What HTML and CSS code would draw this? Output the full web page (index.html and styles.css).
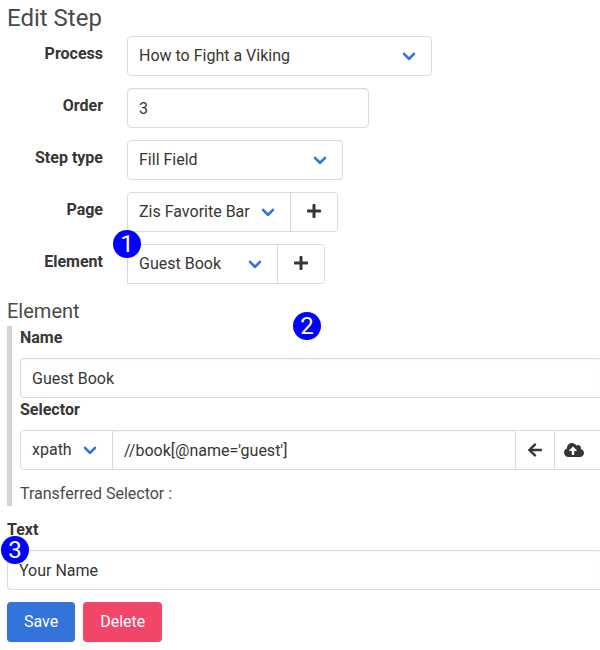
FILE: index.html
```html
<!DOCTYPE html>
<html lang="en">
<head>
<meta charset="utf-8">
<title>Edit Step</title>
<link rel="stylesheet" href="styles.css">
</head>
<body>
<main class="page">
  <h1 class="title">Edit Step</h1>
  <div class="rows">
    <div class="row"><div class="row-label">Process</div><div class="select w-process">How to Fight a Viking</div></div>
    <div class="row"><div class="row-label">Order</div><div class="input w-order">3</div></div>
    <div class="row"><div class="row-label">Step type</div><div class="select w-type">Fill Field</div></div>
    <div class="row"><div class="row-label">Page</div>
      <div class="addons">
        <div class="select w-page">Zis Favorite Bar</div>
        <div class="icon-button add"><svg width="14" height="16" viewBox="0 0 448 512"><path d="M416 208H272V64c0-17.67-14.33-32-32-32h-32c-17.67 0-32 14.33-32 32v144H32c-17.67 0-32 14.33-32 32v32c0 17.67 14.33 32 32 32h144v144c0 17.67 14.33 32 32 32h32c17.67 0 32-14.33 32-32V304h144c17.67 0 32-14.33 32-32v-32c0-17.67-14.33-32-32-32z"/></svg></div>
      </div>
    </div>
    <div class="row"><div class="row-label">Element</div>
      <div class="addons">
        <div class="select w-element">Guest Book</div>
        <div class="icon-button add"><svg width="14" height="16" viewBox="0 0 448 512"><path d="M416 208H272V64c0-17.67-14.33-32-32-32h-32c-17.67 0-32 14.33-32 32v144H32c-17.67 0-32 14.33-32 32v32c0 17.67 14.33 32 32 32h144v144c0 17.67 14.33 32 32 32h32c17.67 0 32-14.33 32-32V304h144c17.67 0 32-14.33 32-32v-32c0-17.67-14.33-32-32-32z"/></svg></div>
        <span class="marker marker-one">1</span>
      </div>
    </div>
  </div>
  <h2 class="subtitle">Element</h2>
  <section class="element">
    <span class="marker marker-two">2</span>
    <div class="label">Name</div>
    <div class="input open-end">Guest Book</div>
    <div class="label">Selector</div>
    <div class="addons">
      <div class="select w-xpath">xpath</div>
      <div class="input w-selector">//book[@name='guest']</div>
      <div class="icon-button"><svg width="14" height="16" viewBox="0 0 448 512"><path d="M257.5 445.1l-22.2 22.2c-9.4 9.4-24.6 9.4-33.9 0L7 273c-9.4-9.4-9.4-24.6 0-33.9L201.4 44.7c9.4-9.4 24.6-9.4 33.9 0l22.2 22.2c9.5 9.5 9.3 25-.4 34.3L136.6 216H424c13.3 0 24 10.7 24 24v32c0 13.3-10.7 24-24 24H136.6l120.5 114.8c9.8 9.3 10 24.8.4 34.3z"/></svg></div>
      <div class="icon-button upload"><svg width="20" height="16" viewBox="0 0 640 512"><path d="M537.6 226.6c4.1-10.7 6.4-22.4 6.4-34.6 0-53-43-96-96-96-19.7 0-38.1 6-53.3 16.2C367 64.2 315.3 32 256 32c-88.4 0-160 71.6-160 160 0 2.7.1 5.4.2 8.1C40.2 219.8 0 273.2 0 336c0 79.5 64.5 144 144 144h368c70.7 0 128-57.3 128-128 0-61.9-44-113.6-102.4-125.4zM393.4 288H328v112c0 8.8-7.2 16-16 16h-48c-8.8 0-16-7.2-16-16V288h-65.4c-14.3 0-21.4-17.2-11.3-27.3l105.400-105.400c6.200-6.200 16.400-6.200 22.600 0l105.400 105.400c10.100 10.100 2.900 27.300-11.300 27.300z"/></svg></div>
    </div>
    <p class="transferred">Transferred Selector :</p>
  </section>
  <div class="text-field">
    <div class="label">Text</div>
    <div class="input open-end">Your Name<span class="marker marker-three">3</span></div>
  </div>
  <div class="buttons">
    <button class="button save">Save</button>
    <button class="button delete">Delete</button>
  </div>
</main>
</body>
</html>
```
FILE: styles.css
```css
*, *::before, *::after { box-sizing: border-box; }
body {
  margin: 0;
  background: #fff;
  color: #4a4a4a;
  font: 400 16px/24px Roboto, sans-serif;
}
.page { padding-left: 7px; }
.title { margin: 0; font-size: 24px; font-weight: 400; line-height: 36px; }
.rows { display: flex; flex-direction: column; gap: 12px; }
.row { display: flex; gap: 24px; }
.row-label { width: 96px; padding-top: 6px; text-align: right; color: #363636; font-weight: 700; }
.input, .select {
  position: relative;
  height: 40px;
  padding: 7px 11px;
  border: 1px solid #dbdbdb;
  border-radius: 4px;
  background: #fff;
  color: #363636;
  white-space: nowrap;
}
.input { padding-top: 8px; box-shadow: inset 0 1px 2px rgba(10, 10, 10, .05); }
.input.open-end { border-right: 0; border-radius: 4px 0 0 4px; }
.select::after {
  content: "";
  position: absolute;
  top: 50%;
  right: 17px;
  width: 10px;
  height: 10px;
  margin-top: -7px;
  border: 3px solid #3273dc;
  border-top: 0;
  border-right: 0;
  border-radius: 2px;
  transform: rotate(-45deg);
}
.w-process { width: 305px; }
.w-order { width: 242px; }
.w-type { width: 216px; }
.w-page { width: 164px; }
.w-element { width: 151px; }
.w-xpath { width: 93px; }
.w-selector { width: 404px; }
.addons { position: relative; display: flex; }
.addons > .select { border-radius: 4px 0 0 4px; }
.addons > .w-element { border-radius: 0; }
.addons > .input { margin-left: -1px; border-radius: 0; }
.icon-button {
  display: flex;
  align-items: center;
  justify-content: center;
  width: 40px;
  height: 40px;
  margin-left: -1px;
  border: 1px solid #dbdbdb;
  fill: #363636;
}
.add { width: 48px; padding-bottom: 2px; border-radius: 0 4px 4px 0; }
.upload { flex: 1; justify-content: flex-start; padding-left: 9px; border-right: 0; }
.subtitle { margin: 12px 0 0; font-size: 20px; font-weight: 400; line-height: 30px; }
.element { position: relative; padding-left: 8px; border-left: 5px solid #d3d3d3; }
.label { margin-bottom: 8px; color: #363636; font-weight: 700; }
.transferred { margin: 12px 0 0; }
.text-field { margin-top: 12px; }
.buttons { display: flex; gap: 8px; margin-top: 12px; }
.button {
  height: 40px;
  padding: 0 17px;
  border: 0;
  border-radius: 4px;
  color: #fff;
  font: inherit;
}
.save { background: #3273dc; }
.delete { background: #f14668; }
.marker {
  position: absolute;
  z-index: 1;
  width: 28px;
  height: 28px;
  border-radius: 50%;
  background: #00f;
  color: #fff;
  font-size: 24px;
  line-height: 28px;
  text-align: center;
}
.marker-one { top: -14px; left: -14px; }
.marker-two { top: -14px; left: 281px; }
.marker-three { top: -15px; left: -7px; }
```
